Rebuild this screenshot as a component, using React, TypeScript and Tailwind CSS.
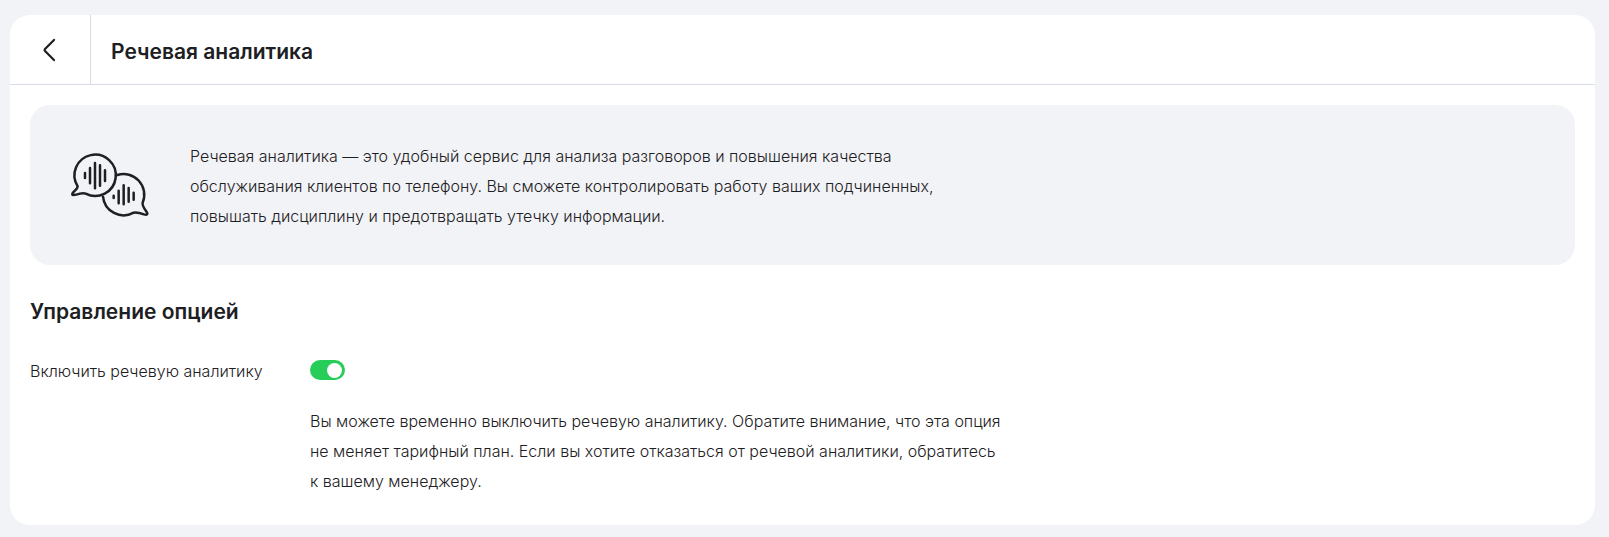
import { useState } from 'react';

function ChevronIcon() {
  return (
    <svg
      className="w-6 h-6"
      viewBox="0 0 24 24"
      fill="none"
      stroke="currentColor"
      strokeWidth="2.2"
      strokeLinecap="round"
      aria-hidden="true"
    >
      <path d="M16 1.9 7 11Q6 12 7 13l9 9.1" />
    </svg>
  );
}

function SpeechIcon() {
  return (
    <svg
      className="w-20 h-20 shrink-0"
      viewBox="30 16 240 240"
      fill="none"
      stroke="currentColor"
      strokeWidth="7.5"
      strokeLinecap="round"
      strokeLinejoin="round"
      aria-hidden="true"
    >
      <path d="M53 137A62 62 0 1 1 77 159Q70 156 60 159Q48 163 40 163Q35 163 38 157C46 148 53 145 53 137Z" />
      <path d="M172 103A62 62 0 0 1 248 186C246 194 250 200 258 211Q264 219 261 221Q259 223 252 221Q232 214 221 216A62 62 0 0 1 129 168" />
      <path d="M75 97v15M90 82v46M105 67v76M120 74v61M135 89v32" />
      <path d="M161 165v7M176 150v38M191 134v57M206 142v41M221 156v21" />
    </svg>
  );
}

function Switch({ id, checked, onChange }: { id: string; checked: boolean; onChange: (value: boolean) => void }) {
  return (
    <input
      id={id}
      type="checkbox"
      role="switch"
      checked={checked}
      onChange={(e) => onChange(e.target.checked)}
      className="appearance-none block w-[35px] h-5 rounded-full bg-[#bcc3d0] checked:bg-[#26cd58] cursor-pointer before:block before:w-[15px] before:h-[15px] before:mt-[3px] before:ml-[3px] before:rounded-full before:bg-white checked:before:ml-[17px]"
    />
  );
}

export default function App() {
  const [enabled, setEnabled] = useState(true);

  return (
    <div className="min-h-screen bg-[#f2f3f7] pt-[15px] pb-3 pl-[10px] pr-[14px] font-['Inter',sans-serif] text-base font-light leading-[30px] text-[#1d2023]">
      <main className="bg-white rounded-[20px]">
        <header className="flex h-[70px] border-b border-[#d8dce6]">
          <button
            type="button"
            aria-label="Назад"
            className="flex w-[81px] items-center justify-center border-r border-[#d8dce6] cursor-pointer"
          >
            <ChevronIcon />
          </button>
          <h1 className="flex items-center pl-5 pt-1 text-[21px] font-semibold">Речевая аналитика</h1>
        </header>

        <div className="px-5 pt-5 pb-[29px]">
          <section className="flex items-center gap-10 rounded-[20px] bg-[#f2f3f7] px-10 pt-9 pb-[34px]">
            <SpeechIcon />
            <p className="max-w-[760px]">
              Речевая аналитика — это удобный сервис для анализа разговоров и повышения качества
              обслуживания клиентов по телефону. Вы сможете контролировать работу ваших подчиненных,
              повышать дисциплину и предотвращать утечку информации.
            </p>
          </section>

          <h2 className="mt-8 text-[21px] font-semibold">Управление опцией</h2>

          <div className="mt-[29px] flex">
            <label htmlFor="speech-analytics" className="w-[280px] shrink-0">
              Включить речевую аналитику
            </label>
            <div>
              <div className="flex h-7 items-center">
                <Switch id="speech-analytics" checked={enabled} onChange={setEnabled} />
              </div>
              <p className="mt-[22px] max-w-[710px]">
                Вы можете временно выключить речевую аналитику. Обратите внимание, что эта опция
                не&nbsp;меняет тарифный план. Если вы хотите отказаться от речевой аналитики, обратитесь
                к&nbsp;вашему менеджеру.
              </p>
            </div>
          </div>
        </div>
      </main>
    </div>
  );
}
